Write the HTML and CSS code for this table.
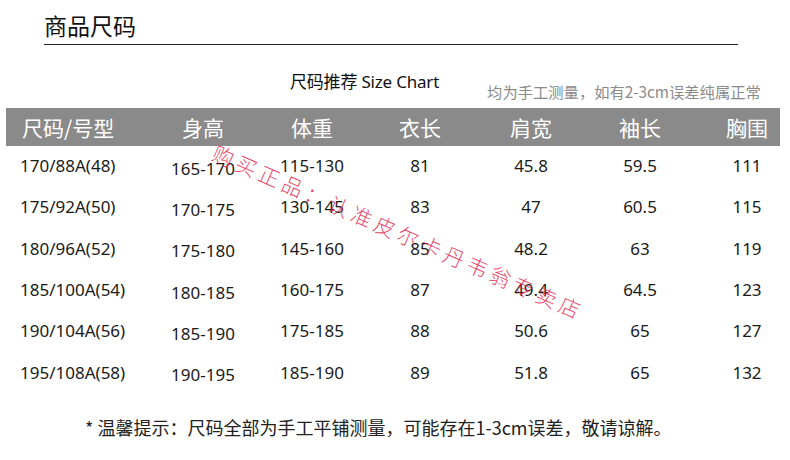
FILE: index.html
```html
<!DOCTYPE html>
<html lang="zh-CN">
<head>
<meta charset="utf-8">
<title>商品尺码</title>
<link rel="stylesheet" href="styles.css">
</head>
<body>
<div class="page">
  <h1 class="title">商品尺码</h1>
  <div class="subhead">
    <span class="chart-name">尺码推荐 Size Chart</span>
    <span class="chart-note">均为手工测量，如有2-3cm误差纯属正常</span>
  </div>
  <div class="table">
    <div class="row head">
      <div class="c c1">尺码/号型</div><div class="c c2">身高</div><div class="c c3">体重</div><div class="c c4">衣长</div><div class="c c5">肩宽</div><div class="c c6">袖长</div><div class="c c7">胸围</div>
    </div>
    <div class="row">
      <div class="c c1">170/88A(48)</div><div class="c c2">165-170</div><div class="c c3">115-130</div><div class="c c4">81</div><div class="c c5">45.8</div><div class="c c6">59.5</div><div class="c c7">111</div>
    </div>
    <div class="row">
      <div class="c c1">175/92A(50)</div><div class="c c2">170-175</div><div class="c c3">130-145</div><div class="c c4">83</div><div class="c c5">47</div><div class="c c6">60.5</div><div class="c c7">115</div>
    </div>
    <div class="row">
      <div class="c c1">180/96A(52)</div><div class="c c2">175-180</div><div class="c c3">145-160</div><div class="c c4">85</div><div class="c c5">48.2</div><div class="c c6">63</div><div class="c c7">119</div>
    </div>
    <div class="row">
      <div class="c c1">185/100A(54)</div><div class="c c2">180-185</div><div class="c c3">160-175</div><div class="c c4">87</div><div class="c c5">49.4</div><div class="c c6">64.5</div><div class="c c7">123</div>
    </div>
    <div class="row">
      <div class="c c1">190/104A(56)</div><div class="c c2">185-190</div><div class="c c3">175-185</div><div class="c c4">88</div><div class="c c5">50.6</div><div class="c c6">65</div><div class="c c7">127</div>
    </div>
    <div class="row">
      <div class="c c1">195/108A(58)</div><div class="c c2">190-195</div><div class="c c3">185-190</div><div class="c c4">89</div><div class="c c5">51.8</div><div class="c c6">65</div><div class="c c7">132</div>
    </div>
  </div>
  <p class="tip">* 温馨提示：尺码全部为手工平铺测量，可能存在1-3cm误差，敬请谅解。</p>
  <div class="watermark">购买正品：认准皮尔卡丹韦翁专卖店</div>
</div>
</body>
</html>
```
FILE: styles.css
```css
* { box-sizing: border-box; }
html, body {
  margin: 0;
  padding: 0;
  background: #ffffff;
}
body {
  font-family: "Noto Sans", "Noto Sans CJK SC", sans-serif;
  color: #1a1a1a;
}
.page {
  position: relative;
  width: 790px;
  height: 460px;
  overflow: hidden;
}
.title {
  margin: 0 52px 0 44px;
  padding-top: 10px;
  height: 45px;
  font-family: "Noto Sans CJK SC", sans-serif;
  font-size: 23px;
  font-weight: 400;
  line-height: 30px;
  color: #111;
  border-bottom: 1.5px solid #222;
}
.subhead {
  display: flex;
  align-items: flex-end;
  height: 63px;
  padding-bottom: 8px;
}
.chart-name {
  margin-left: 290px;
  font-size: 17px;
  line-height: 22px;
  margin-bottom: 7px;
  color: #111;
  letter-spacing: -0.2px;
}
.chart-note {
  margin-left: 48px;
  font-size: 15.3px;
  line-height: 20px;
  margin-bottom: -1px;
  color: #8a8a8a;
  font-family: "Noto Sans CJK SC", sans-serif;
}
.table {
  margin-left: 6px;
  width: 774px;
}
.row {
  display: grid;
  grid-template-columns: 129px 136px 82px 134px 88px 130px 75px;
  height: 41.3px;
  align-items: center;
  font-size: 17px;
}
.row.head {
  height: 38px;
  background: #8b8a8a;
  color: #ffffff;
  font-family: "Noto Sans CJK SC", sans-serif;
  font-size: 21px;
}
.row:nth-child(2) { margin-top: -1px; }
.c {
  text-align: center;
  white-space: nowrap;
}
.row .c1 {
  text-align: left;
  padding-left: 14px;
}
.row.head .c1 { padding-left: 16px; }
.row .c2 { padding-top: 5px; }
.row.head .c2 { padding-top: 0; }
.row .c7 { padding-left: 9px; }
.tip {
  margin: 22px 0 0 0;
  padding-left: 85px;
  font-family: "Noto Sans CJK SC", sans-serif;
  font-size: 18px;
  line-height: 24px;
  color: #222;
}
.watermark {
  position: absolute;
  left: 214px;
  top: 141px;
  transform-origin: 0 50%;
  transform: rotate(23.6deg);
  font-family: "Noto Sans CJK SC", sans-serif;
  font-size: 21px;
  font-weight: 300;
  letter-spacing: 4.2px;
  color: rgba(226, 40, 82, 0.85);
  white-space: nowrap;
  line-height: 20px;
}
```
